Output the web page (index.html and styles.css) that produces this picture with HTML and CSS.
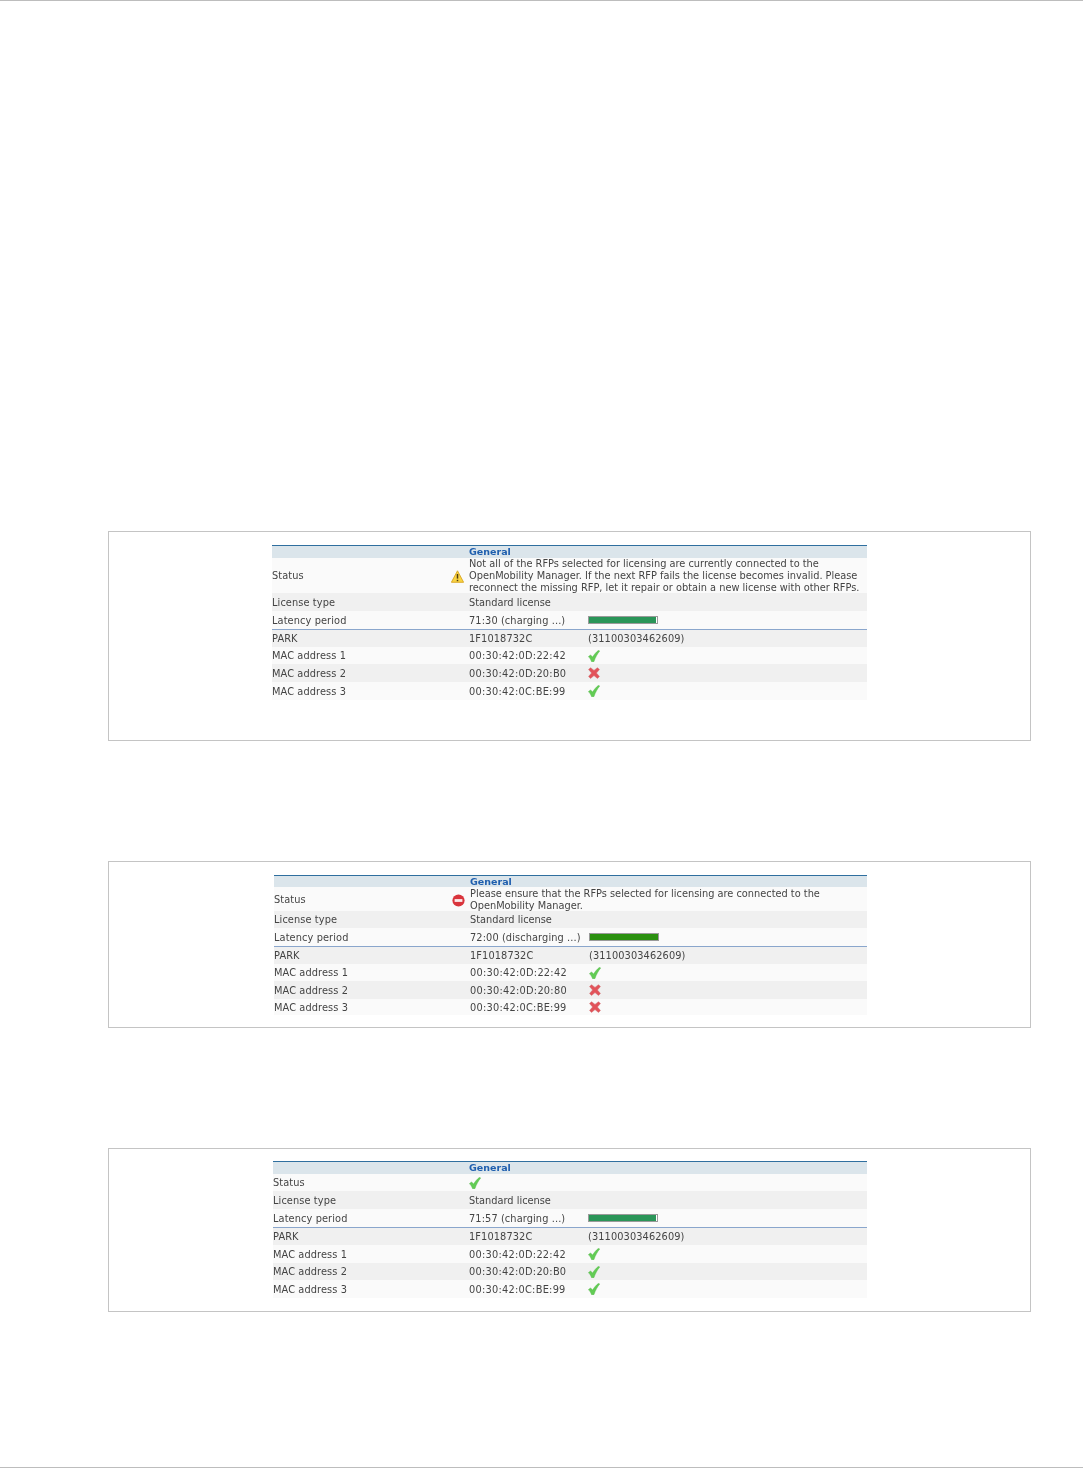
FILE: index.html
```html
<!DOCTYPE html>
<html lang="en">
<head>
<meta charset="utf-8">
<title>License status</title>
<link rel="stylesheet" href="styles.css">
</head>
<body>
<svg class="defs" width="0" height="0" aria-hidden="true">
  <defs>
    <symbol id="ok" viewBox="0 0 12 12">
      <path d="M0.4 6.6 L2.6 4.9 L4.6 7.1 C6 4.6 8 2.2 10.6 0.2 L11.7 1 C9.4 3.8 7.4 7.4 5.9 11.7 L3.6 11.7 C2.8 9.6 1.8 8 0.4 6.6 Z" fill="#62cc54" stroke="#4bb342" stroke-width="0.4"/>
    </symbol>
    <symbol id="bad" viewBox="0 0 12 12">
      <path d="M2.5 0.7 L6 3.4 L9.5 0.7 L11.4 2.6 L8.4 6 L11.4 9.4 L9.5 11.4 L6 8.6 L2.5 11.4 L0.6 9.4 L3.6 6 L0.6 2.6 Z" fill="#e2535a" stroke="#cf6468" stroke-width="0.5"/>
    </symbol>
    <symbol id="warn" viewBox="0 0 13 13">
      <path d="M6.5 0.8 L12.6 12.3 L0.4 12.3 Z" fill="#f9d443" stroke="#d9a520" stroke-width="0.9" stroke-linejoin="round"/>
      <path d="M6.5 4 L6.5 8.6" stroke="#4d3b10" stroke-width="1.5"/>
      <path d="M6.5 9.8 L6.5 11.2" stroke="#4d3b10" stroke-width="1.5"/>
    </symbol>
    <symbol id="stop" viewBox="0 0 13 13">
      <circle cx="6.5" cy="6.5" r="6.1" fill="#d9343c"/>
      <rect x="2.6" y="5.1" width="7.8" height="2.8" fill="#fbeaea"/>
    </symbol>
  </defs>
</svg>
<main class="page">
  <section class="frame frame-a">
    <div class="table">
      <div class="row head"><span></span><span class="title">General</span></div>
      <div class="row status-3">
        <span class="label-icon">Status<svg class="icon-status"><use href="#warn"/></svg></span>
        <span class="wide">Not all of the RFPs selected for licensing are currently connected to the<br>OpenMobility Manager. If the next RFP fails the license becomes invalid. Please<br>reconnect the missing RFP, let it repair or obtain a new license with other RFPs.</span>
      </div>
      <div class="row"><span>License type</span><span class="wide">Standard license</span></div>
      <div class="row rule"><span>Latency period</span><span>71:30 (charging ...)</span><span class="bar"><i class="fill fill-charge"></i></span></div>
      <div class="row short"><span>PARK</span><span>1F1018732C</span><span>(31100303462609)</span></div>
      <div class="row short"><span>MAC address 1</span><span class="mac">00:30:42:0D:22:42</span><svg class="icon"><use href="#ok"/></svg></div>
      <div class="row"><span>MAC address 2</span><span class="mac">00:30:42:0D:20:B0</span><svg class="icon"><use href="#bad"/></svg></div>
      <div class="row"><span>MAC address 3</span><span class="mac">00:30:42:0C:BE:99</span><svg class="icon"><use href="#ok"/></svg></div>
    </div>
  </section>
  <section class="frame frame-b">
    <div class="table">
      <div class="row head short-head"><span></span><span class="title">General</span></div>
      <div class="row status-2">
        <span class="label-icon">Status<svg class="icon-status"><use href="#stop"/></svg></span>
        <span class="wide">Please ensure that the RFPs selected for licensing are connected to the<br>OpenMobility Manager.</span>
      </div>
      <div class="row short"><span>License type</span><span class="wide">Standard license</span></div>
      <div class="row rule"><span>Latency period</span><span>72:00 (discharging ...)</span><span class="bar"><i class="fill fill-discharge"></i></span></div>
      <div class="row short"><span>PARK</span><span>1F1018732C</span><span>(31100303462609)</span></div>
      <div class="row short"><span>MAC address 1</span><span class="mac">00:30:42:0D:22:42</span><svg class="icon"><use href="#ok"/></svg></div>
      <div class="row"><span>MAC address 2</span><span class="mac">00:30:42:0D:20:80</span><svg class="icon"><use href="#bad"/></svg></div>
      <div class="row shortest"><span>MAC address 3</span><span class="mac">00:30:42:0C:BE:99</span><svg class="icon"><use href="#bad"/></svg></div>
    </div>
  </section>
  <section class="frame frame-c">
    <div class="table">
      <div class="row head"><span></span><span class="title">General</span></div>
      <div class="row short"><span>Status</span><svg class="icon"><use href="#ok"/></svg></div>
      <div class="row"><span>License type</span><span class="wide">Standard license</span></div>
      <div class="row rule"><span>Latency period</span><span>71:57 (charging ...)</span><span class="bar"><i class="fill fill-charge"></i></span></div>
      <div class="row short"><span>PARK</span><span>1F1018732C</span><span>(31100303462609)</span></div>
      <div class="row"><span>MAC address 1</span><span class="mac">00:30:42:0D:22:42</span><svg class="icon"><use href="#ok"/></svg></div>
      <div class="row short"><span>MAC address 2</span><span class="mac">00:30:42:0D:20:B0</span><svg class="icon"><use href="#ok"/></svg></div>
      <div class="row"><span>MAC address 3</span><span class="mac">00:30:42:0C:BE:99</span><svg class="icon"><use href="#ok"/></svg></div>
    </div>
  </section>
</main>
</body>
</html>
```
FILE: styles.css
```css
html, body {
  margin: 0;
  padding: 0;
  background: #fff;
}
.defs {
  display: block;
  position: absolute;
}
.page {
  box-sizing: border-box;
  height: 1468px;
  border-top: 1px solid #bdbdbd;
  border-bottom: 1px solid #bdbdbd;
  padding: 530px 52px 0 108px;
  display: flex;
  flex-direction: column;
}
.frame {
  box-sizing: border-box;
  border: 1px solid #c4c4c4;
  padding-top: 13px;
}
.frame-a {
  height: 210px;
  padding-left: 163px;
  padding-right: 163px;
}
.frame-b {
  height: 167px;
  margin-top: 120px;
  padding-left: 165px;
  padding-right: 163px;
}
.frame-c {
  height: 164px;
  margin-top: 120px;
  padding-top: 12px;
  padding-left: 164px;
  padding-right: 163px;
}
.table {
  font-family: "DejaVu Sans", Verdana, sans-serif;
  font-size: 9.8px;
  letter-spacing: 0.1px;
  color: #444;
  filter: blur(0.3px);
  --col1: 197px;
  --col2: 119px;
}
.frame-b .table,
.frame-c .table {
  --col1: 196px;
}
.row {
  display: grid;
  grid-template-columns: var(--col1) var(--col2) 1fr;
  align-items: center;
  height: 18px;
  white-space: nowrap;
}
.row:nth-child(odd) {
  background: #f0f0f0;
}
.row:nth-child(even) {
  background: #fafafa;
}
.row.head {
  box-sizing: border-box;
  height: 13px;
  border-top: 1px solid #2f6f9f;
  background: #dbe5eb;
  line-height: 12px;
}
.row.short-head {
  height: 12px;
}
.row.short {
  height: 17px;
}
.row.shortest {
  height: 16px;
}
.row.rule {
  box-sizing: content-box;
  border-bottom: 1px solid #8aa6cc;
}
.row.status-3 {
  height: 35px;
  line-height: 12px;
}
.row.status-2 {
  box-sizing: border-box;
  height: 24px;
  padding-top: 1px;
  line-height: 12px;
}
.title {
  color: #1f5fae;
  font-weight: 700;
  font-size: 9.5px;
  letter-spacing: 0;
}
.wide {
  grid-column: 2 / 4;
  letter-spacing: 0;
}
.mac {
  letter-spacing: 0.25px;
}
.label-icon {
  display: flex;
  align-items: center;
  justify-content: space-between;
  padding-right: 5.5px;
}
.icon-status {
  width: 13px;
  height: 13px;
}
.icon {
  width: 12px;
  height: 12px;
}
.bar {
  box-sizing: border-box;
  display: block;
  width: 70px;
  height: 8px;
  border: 1px solid #9a9a9a;
  background: #fff;
}
.fill {
  display: block;
  height: 100%;
}
.fill-charge {
  width: 67px;
  background: #2a9558;
}
.fill-discharge {
  width: 100%;
  background: #2b9010;
}
```
